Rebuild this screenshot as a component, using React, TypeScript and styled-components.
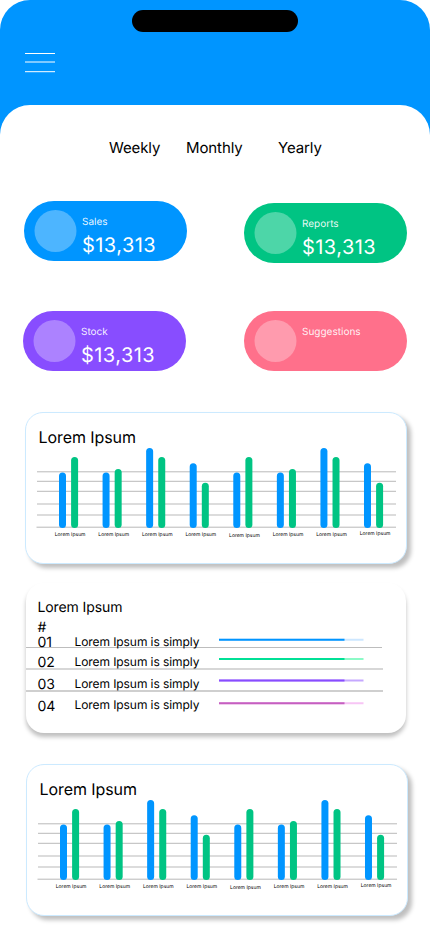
import React from "react";
import styled, { createGlobalStyle } from "styled-components";

const GlobalStyle = createGlobalStyle`
  * { box-sizing: border-box; }
  body { margin: 0; background: #fff; overflow: hidden; }
`;

const Screen = styled.main`
  width: 430px;
  height: 932px;
  overflow: hidden;
  background: #fff;
  color: #000;
  font-family: Inter, "Liberation Sans", sans-serif;
  font-weight: 400;
  letter-spacing: -0.005em;
  text-rendering: geometricPrecision;
`;

const Header = styled.header`
  height: 135px;
  padding-top: 10px;
  background: #0095ff;
  border-radius: 30px 30px 0 0;
`;

const Island = styled.div`
  width: 166px;
  height: 22px;
  margin: 0 auto;
  border-radius: 11px;
  background: #000;
`;

const MenuIcon = styled.svg`
  display: block;
  margin: 20px 0 0 25px;
`;

const Sheet = styled.div`
  height: 827px;
  margin-top: -30px;
  background: #fff;
  border-radius: 30px 30px 0 0;
`;

const Tabs = styled.nav`
  display: flex;
  padding: 33px 0 0 109px;
  height: 96px;
  font-size: 15px;
  line-height: 19px;
  letter-spacing: -0.1px;
`;

const Tab = styled.span<{ $width: number }>`
  width: ${(p) => p.$width}px;
`;

const Stats = styled.section`
  display: grid;
  grid-template-columns: 221px 163px;
  grid-template-rows: 110px 101px;
  padding-left: 23px;
`;

const Pill = styled.article<{ $color: string; $x?: number; $y?: number }>`
  display: flex;
  width: 163px;
  height: 60px;
  margin: ${(p) => p.$y ?? 0}px 0 0 ${(p) => p.$x ?? 0}px;
  padding: 9px 0 0 10px;
  border-radius: 30px;
  background: ${(p) => p.$color};
  color: #fff;
`;

const Disc = styled.svg`
  display: block;
  width: 43px;
  height: 42px;
  fill: rgba(255, 255, 255, 0.3);
`;

const PillText = styled.div`
  padding: 6px 0 0 5px;
`;

const PillLabel = styled.div`
  font-size: 10px;
  line-height: 12px;
  letter-spacing: 0;
  color: rgba(255, 255, 255, 0.92);
`;

const Amount = styled.div`
  margin-top: 5px;
  font-size: 20px;
  line-height: 24px;
  letter-spacing: 0.45px;
`;

const ChartCard = styled.section<{ $x: number }>`
  width: 382px;
  height: 152px;
  margin-left: ${(p) => p.$x}px;
  border: 1px solid #cceaff;
  border-radius: 18px;
  background: #fff;
  box-shadow: 4px 4px 4px rgba(0, 0, 0, 0.25);
`;

const ChartTitle = styled.h2`
  height: 34px;
  margin: 0;
  padding: 15px 0 0 12.5px;
  font-size: 16px;
  font-weight: inherit;
  line-height: 19px;
`;

const Plot = styled.svg`
  display: block;
  letter-spacing: 0;
`;

const TableCard = styled.section`
  width: 380px;
  height: 150px;
  margin: 19px 0 31px 26px;
  padding-top: 15px;
  border-radius: 18px;
  background: #fff;
  box-shadow: 0 4px 4px rgba(0, 0, 0, 0.25);
`;

const TableTitle = styled.div`
  padding-left: 11.5px;
  font-size: 14px;
  line-height: 20px;
  letter-spacing: -0.1px;
`;

const Rows = styled.div`
  margin: -15px 0 0 -0.5px;
`;

const Row = styled.div<{ $height: number; $line: string; $thick: number; $width: number }>`
  display: flex;
  width: ${(p) => p.$width}px;
  height: ${(p) => p.$height}px;
  padding-left: 12px;
  border-bottom: ${(p) => p.$thick}px solid ${(p) => p.$line};
`;

const RowNumber = styled.span<{ $top: number }>`
  width: 37px;
  margin-top: ${(p) => p.$top}px;
  font-size: 14px;
  line-height: 17px;
`;

const RowName = styled.span<{ $top: number }>`
  width: 144px;
  margin-top: ${(p) => p.$top}px;
  font-size: 12px;
  line-height: 15px;
  white-space: nowrap;
`;

const Meter = styled.svg<{ $top: number }>`
  display: block;
  margin-top: ${(p) => p.$top}px;
`;

const GRID_LINES = [24.8, 34.3, 44.3, 57, 68, 80.2];

// Top edges of the blue and green bars, and the label baseline, per group.
const GROUPS = [
  [25.6, 10, 88.6],
  [25.6, 22, 88.6],
  [1, 10, 88.6],
  [16.3, 35.8, 88.6],
  [25.6, 10, 89.6],
  [25.6, 22, 88.6],
  [1, 10, 88.6],
  [16.3, 35.8, 87.6],
];

function BarChart({ x }: { x: number }) {
  return (
    <ChartCard $x={x}>
      <ChartTitle>Lorem Ipsum</ChartTitle>
      <Plot width="380" height="100" viewBox="0 0 380 100">
        {GRID_LINES.map((y, i) => (
          <line key={y} x1={i === 5 ? 10.5 : 11} x2="370" y1={y} y2={y} stroke="#b9b9b9" />
        ))}
        {GROUPS.map(([blue, green, label], i) => {
          const left = 33 + i * 43.57;
          return (
            <g key={i}>
              <rect x={left} y={blue} width="7" height={81 - blue} rx="3.5" fill="#0095ff" />
              <rect x={left + 12.1} y={green} width="7" height={81 - green} rx="3.5" fill="#00c483" />
              <text x={left - 4.2} y={label} fontSize="5">Lorem Ipsum</text>
            </g>
          );
        })}
      </Plot>
    </ChartCard>
  );
}

// Heights and offsets of each row, its rule, and its progress meter.
const ROWS = [
  { n: "01", h: 25, w: 356.5, num: 11, name: 11, bar: 14, y: 2.8, fill: "#0095ff", bg: "#cde7ff", line: "#bdbdbd", lt: 1 },
  { n: "02", h: 22, w: 357, num: 6, name: 6, bar: 9, y: 2, fill: "#00e096", bg: "#8cfac7", line: "#d7d7d7", lt: 2 },
  { n: "03", h: 22, w: 357, num: 6, name: 6, bar: 8, y: 2.4, fill: "#884dff", bg: "#c5a8ff", line: "#cfcfcf", lt: 2 },
  { n: "04", h: 30, w: 357, num: 6, name: 5, bar: 9, y: 2.3, fill: "#c55fc0", bg: "#f7c5f5", line: "transparent", lt: 0 },
];

const STATS = [
  { label: "Sales", amount: "$13,313", color: "#0095ff", x: 1, y: 0 },
  { label: "Reports", amount: "$13,313", color: "#00c483", x: 0, y: 2 },
  { label: "Stock", amount: "$13,313", color: "#884dff", x: 0, y: 0 },
  { label: "Suggestions", amount: "", color: "#ff708b", x: 0, y: 0 },
];

export default function App() {
  return (
    <Screen>
      <GlobalStyle />
      <Header>
        <Island />
        <MenuIcon width="30" height="22" viewBox="0 0 30 22" stroke="#fff">
          <path d="M0 1.5H30M0 10H30M0 19.7H30" />
        </MenuIcon>
      </Header>
      <Sheet>
        <Tabs>
          <Tab $width={77}>Weekly</Tab>
          <Tab $width={92}>Monthly</Tab>
          <Tab $width={60}>Yearly</Tab>
        </Tabs>
        <Stats>
          {STATS.map((s) => (
            <Pill key={s.label} $color={s.color} $x={s.x} $y={s.y}>
              <Disc viewBox="0 0 43 42"><circle cx="21.5" cy="21" r="21" /></Disc>
              <PillText>
                <PillLabel>{s.label}</PillLabel>
                {s.amount && <Amount>{s.amount}</Amount>}
              </PillText>
            </Pill>
          ))}
        </Stats>
        <BarChart x={25} />
        <TableCard>
          <TableTitle>Lorem Ipsum</TableTitle>
          <TableTitle>#</TableTitle>
          <Rows>
            {ROWS.map((r) => (
              <Row key={r.n} $height={r.h} $width={r.w} $line={r.line} $thick={r.lt}>
                <RowNumber $top={r.num}>{r.n}</RowNumber>
                <RowName $top={r.name}>Lorem Ipsum is simply</RowName>
                <Meter $top={r.bar} width="145" height="4" viewBox="0 0 145 4" strokeWidth="2">
                  <line x1="0" x2="144.5" y1={r.y} y2={r.y} stroke={r.bg} />
                  <line x1="0" x2="125.5" y1={r.y} y2={r.y} stroke={r.fill} />
                </Meter>
              </Row>
            ))}
          </Rows>
        </TableCard>
        <BarChart x={26} />
      </Sheet>
    </Screen>
  );
}
